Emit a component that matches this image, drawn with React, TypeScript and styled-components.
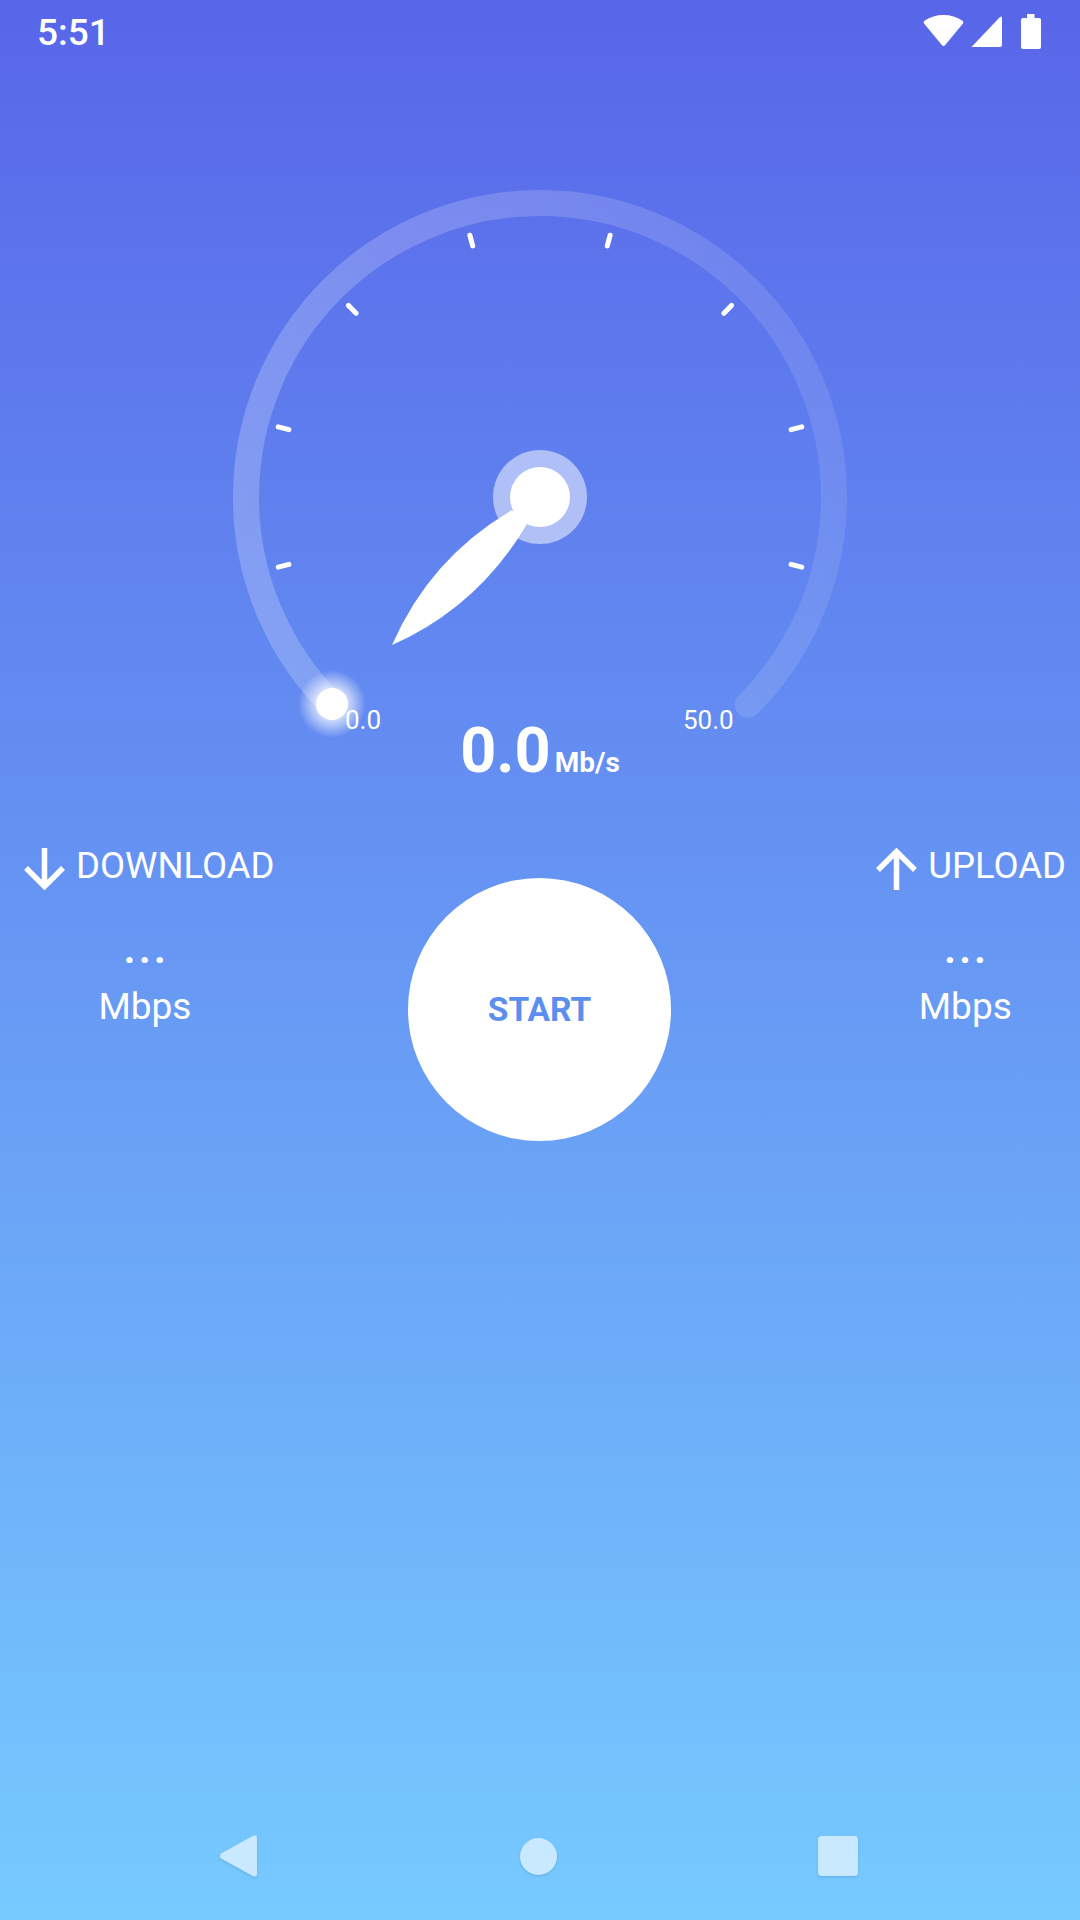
import React from "react";
import styled, { createGlobalStyle } from "styled-components";

const Global = createGlobalStyle`
  html, body { margin: 0; padding: 0; }
  body { font-family: Roboto, "Liberation Sans", sans-serif; color: #fff; }
`;

const Page = styled.div`
  width: 1080px;
  height: 1920px;
  display: flex;
  flex-direction: column;
  overflow: hidden;
  background: linear-gradient(180deg, #5866e9 0%, #76caff 100%);
`;

const StatusBar = styled.div`
  height: 68px;
  box-sizing: border-box;
  padding: 0 39px 0 38px;
  display: flex;
  align-items: flex-start;
`;

const Clock = styled.span`
  font-size: 37px;
  font-weight: 500;
  line-height: 42px;
  margin-top: 12px;
  margin-left: -1px;
  margin-right: auto;
`;

const StatusIcon = styled.svg<{ $gap: number }>`
  display: block;
  margin-top: 14px;
  margin-left: ${(p) => p.$gap}px;
  fill: #fff;
`;

const GaugeBox = styled.div`
  position: relative;
  width: 640px;
  height: 650px;
  margin: 0 auto;
`;

const GaugeArt = styled.svg`
  display: block;
  overflow: visible;
`;

const ScaleLabel = styled.span<{ $left: number }>`
  position: absolute;
  left: ${(p) => p.$left}px;
  top: 637px;
  font-size: 26px;
  line-height: 30px;
`;

const Readout = styled.div`
  display: flex;
  justify-content: center;
  align-items: baseline;
  gap: 4px;
  height: 64px;
  margin-top: 1px;
`;

const ReadoutValue = styled.span`
  font-size: 63px;
  font-weight: 700;
  line-height: 64px;
`;

const ReadoutUnit = styled.span`
  font-size: 28px;
  font-weight: 700;
`;

const Panel = styled.div`
  display: grid;
  grid-template-columns: 384px 263px 1fr;
  padding: 65px 14px 0 24px;
`;

const Side = styled.div<{ $end?: boolean }>`
  justify-self: ${(p) => (p.$end ? "end" : "start")};
`;

const SideHead = styled.div`
  display: flex;
  align-items: center;
  gap: 11px;
  height: 42px;
`;

const SideTitle = styled.span`
  font-size: 36.5px;
  line-height: 42px;
  margin-top: -6px;
`;

const Values = styled.div<{ $shift: number }>`
  width: 190px;
  margin-left: ${(p) => p.$shift}px;
  margin-top: 40px;
  text-align: center;
`;

const Dots = styled.div`
  font-size: 40px;
  font-weight: 700;
  line-height: 40px;
  letter-spacing: 3.5px;
  height: 40px;
  padding-left: 3px;
`;

const Unit = styled.div`
  font-size: 37px;
  line-height: 42px;
  margin-top: 16px;
`;

const StartButton = styled.button`
  width: 263px;
  height: 263px;
  margin-top: 30px;
  padding: 0;
  border: 0;
  border-radius: 50%;
  background: #fff;
  color: #5b8eee;
  font-family: inherit;
  font-size: 33.5px;
  font-weight: 700;
`;

const NavBar = styled.div`
  height: 128px;
  margin-top: auto;
  padding-right: 2px;
  display: flex;
  align-items: center;
  justify-content: center;
  gap: 261px;
`;

const NavIcon = styled.svg`
  display: block;
  fill: #c8e9ff;
  filter: drop-shadow(0 1px 1px rgba(60, 120, 180, 0.35));
`;

const ticks = [-15, 15, 45, 75, 105, 135, 165, 195];

function tickLine(deg: number) {
  const a = (deg * Math.PI) / 180;
  const x = (r: number) => 540 + r * Math.cos(a);
  const y = (r: number) => 497 - r * Math.sin(a);
  return { x1: x(260), y1: y(260), x2: x(271), y2: y(271) };
}

function Gauge() {
  return (
    <GaugeArt width="640" height="650" viewBox="220 68 640 650">
      <defs>
        <linearGradient id="ring" gradientUnits="userSpaceOnUse" x1="233" y1="0" x2="847" y2="0">
          <stop offset="0" stopColor="#fff" stopOpacity="0.22" />
          <stop offset="0.5" stopColor="#fff" stopOpacity="0.17" />
          <stop offset="1" stopColor="#fff" stopOpacity="0.1" />
        </linearGradient>
        <radialGradient id="glow">
          <stop offset="0.45" stopColor="#fff" stopOpacity="0.7" />
          <stop offset="1" stopColor="#fff" stopOpacity="0" />
        </radialGradient>
      </defs>
      <path
        d="M332.1 704.9 A294 294 0 1 1 747.9 704.9"
        fill="none"
        stroke="url(#ring)"
        strokeWidth="26"
        strokeLinecap="round"
      />
      {ticks.map((d) => (
        <line key={d} {...tickLine(d)} stroke="#fff" strokeWidth="5" strokeLinecap="round" />
      ))}
      <circle cx="332" cy="704" r="34" fill="url(#glow)" />
      <circle cx="332" cy="704" r="16" fill="#fff" />
      <circle cx="540" cy="497" r="47" fill="#fff" fillOpacity="0.5" />
      <circle cx="540" cy="497" r="30" fill="#fff" />
      <path d="M392 645 Q430 558 512 510 L527 524 Q478 607 392 645 Z" fill="#fff" />
    </GaugeArt>
  );
}

export default function App() {
  return (
    <Page>
      <Global />
      <StatusBar>
        <Clock>5:51</Clock>
        <StatusIcon $gap={0} width="41" height="32" viewBox="0 0 41 32">
          <path d="M20.5 32 Q19.5 32 18.8 31 L1 9.5 Q0 8 1.5 6.8 Q10 1 20.5 1 Q31 1 39.5 6.8 Q41 8 40 9.5 L22.2 31 Q21.5 32 20.5 32 Z" />
        </StatusIcon>
        <StatusIcon $gap={6} width="32" height="34" viewBox="0 0 32 34">
          <path d="M1.5 33 L30 3 Q32 1.5 32 4 V31 Q32 33 30 33 Z" />
        </StatusIcon>
        <StatusIcon $gap={19} width="20" height="35" viewBox="0 0 20 35">
          <path d="M6 0 H13.5 V4 H18 Q20 4 20 6 V33 Q20 35 18 35 H2 Q0 35 0 33 V6 Q0 4 2 4 H6 Z" />
        </StatusIcon>
      </StatusBar>

      <GaugeBox>
        <Gauge />
        <ScaleLabel $left={125}>0.0</ScaleLabel>
        <ScaleLabel $left={463}>50.0</ScaleLabel>
      </GaugeBox>

      <Readout>
        <ReadoutValue>0.0</ReadoutValue>
        <ReadoutUnit>Mb/s</ReadoutUnit>
      </Readout>

      <Panel>
        <Side>
          <SideHead>
            <svg width="41" height="42" viewBox="0 0 41 42" fill="none" stroke="#fff" strokeWidth="5.5">
              <path d="M20.5 0 V38 M2 20 L20.5 38.5 L39 20" />
            </svg>
            <SideTitle>DOWNLOAD</SideTitle>
          </SideHead>
          <Values $shift={26}>
            <Dots>...</Dots>
            <Unit>Mbps</Unit>
          </Values>
        </Side>
        <StartButton>START</StartButton>
        <Side $end>
          <SideHead>
            <svg width="41" height="42" viewBox="0 0 41 42" fill="none" stroke="#fff" strokeWidth="5.5">
              <path d="M20.5 42 V4 M2 22 L20.5 3.5 L39 22" />
            </svg>
            <SideTitle>UPLOAD</SideTitle>
          </SideHead>
          <Values $shift={-6}>
            <Dots>...</Dots>
            <Unit>Mbps</Unit>
          </Values>
        </Side>
      </Panel>

      <NavBar>
        <NavIcon width="39" height="42" viewBox="0 0 39 42">
          <path d="M1 18.5 L33 0.8 Q37 -0.8 37 3 V39 Q37 42.8 33 41.2 L1 23.5 Q-1 21 1 18.5 Z" />
        </NavIcon>
        <NavIcon width="37" height="37" viewBox="0 0 37 37">
          <circle cx="18.5" cy="18.5" r="18.5" />
        </NavIcon>
        <NavIcon width="40" height="40" viewBox="0 0 40 40">
          <rect width="40" height="40" rx="3.5" />
        </NavIcon>
      </NavBar>
    </Page>
  );
}
